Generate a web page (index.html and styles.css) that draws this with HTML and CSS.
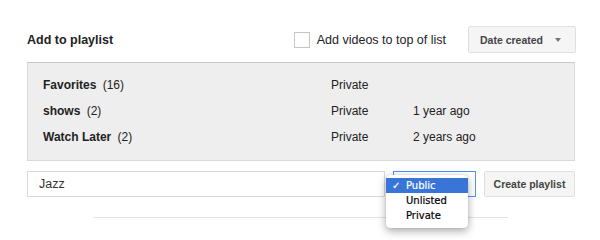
FILE: index.html
```html
<!DOCTYPE html>
<html lang="en">
<head>
    <meta charset="UTF-8">
    <title>Add to playlist</title>
    <link rel="stylesheet" href="styles.css">
</head>
<body>
    <div class="container">
        <div class="header">
            <h2>Add to playlist</h2>
            <label class="top-option">
                <span class="checkbox"></span>
                Add videos to top of list
            </label>
            <button class="btn sort-btn">Date created <span class="arrow"></span></button>
        </div>

        <ul class="playlists">
            <li><span class="name"><b>Favorites</b> (16)</span><span>Private</span><span></span></li>
            <li><span class="name"><b>shows</b> (2)</span><span>Private</span><span>1 year ago</span></li>
            <li><span class="name"><b>Watch Later</b> (2)</span><span>Private</span><span>2 years ago</span></li>
        </ul>

        <div class="create-row">
            <input type="text" class="title-input" value="Jazz">
            <div class="privacy">
                <div class="privacy-box"></div>
                <ul class="privacy-menu">
                    <li class="selected"><span class="check">&#10003;</span>Public</li>
                    <li>Unlisted</li>
                    <li>Private</li>
                </ul>
            </div>
            <button class="btn create-btn">Create playlist</button>
        </div>

        <div class="divider"></div>
    </div>
</body>
</html>
```

FILE: styles.css
```css
body {
    font-family: "Liberation Sans", Arial, sans-serif;
    margin: 0;
    padding: 0;
    min-height: 240px;
    background-color: #fff;
    color: #222;
}

.container {
    width: 548px;
    margin-left: 27px;
    padding-top: 26px;
    padding-bottom: 22px;
}

.header {
    display: flex;
    align-items: center;
    height: 27px;
}

.header h2 {
    font-size: 12.5px;
    font-weight: bold;
    margin: 0;
    flex: 1;
}

.top-option {
    display: flex;
    align-items: center;
    font-size: 12.5px;
    margin-right: 22px;
}

.checkbox {
    width: 14px;
    height: 14px;
    border: 1px solid #c6c6c6;
    margin-right: 7px;
    background: #fff;
}

.btn {
    font-family: "Liberation Sans", Arial, sans-serif;
    font-size: 10.5px;
    font-weight: bold;
    color: #444;
    background: #f5f5f5;
    border: 1px solid #e0e0e0;
    border-radius: 2px;
    height: 27px;
    padding: 0 10px;
    cursor: pointer;
}

.sort-btn {
    width: 108px;
    margin-right: -1px;
    text-align: left;
    display: flex;
    align-items: center;
    padding-left: 11px;
}

.arrow {
    margin-left: auto;
    margin-right: 4px;
    border-left: 3.5px solid transparent;
    border-right: 3.5px solid transparent;
    border-top: 4px solid #777;
}

.playlists {
    list-style: none;
    margin: 9px 0 0;
    padding: 9px 0 10px 15px;
    background: #eeeeee;
    border: 1px solid #d9d9d9;
    border-top-color: #c8c8c8;
    font-size: 12px;
}

.playlists li {
    display: grid;
    grid-template-columns: 288px 82px 1fr;
    height: 26px;
    align-items: center;
}

.playlists b {
    margin-right: 3px;
}

.create-row {
    display: flex;
    gap: 8px;
    margin-top: 10px;
    height: 26px;
}

.title-input {
    width: 358px;
    box-sizing: border-box;
    height: 26px;
    border: 1px solid #d9d9d9;
    padding: 0 11px;
    font-family: "Liberation Sans", Arial, sans-serif;
    font-size: 12.5px;
    color: #333;
    outline: none;
}

.privacy {
    position: relative;
    width: 83px;
}

.privacy-box {
    height: 26px;
    box-sizing: border-box;
    border: 1px solid #4d90fe;
    background: #fff;
}

.privacy-menu {
    position: absolute;
    top: 4px;
    left: -7px;
    width: 82px;
    margin: 0;
    padding: 3px 0 5px;
    list-style: none;
    background: #fff;
    border-radius: 4px;
    box-shadow: 0 3px 9px rgba(0, 0, 0, 0.35), 0 0 1px rgba(0, 0, 0, 0.3);
    font-family: "DejaVu Sans", sans-serif;
    font-size: 10px;
    color: #000;
    z-index: 2;
}

.privacy-menu li {
    height: 15px;
    line-height: 15px;
    padding-left: 20px;
    position: relative;
    -webkit-text-stroke: 0.2px currentColor;
}

.privacy-menu .selected {
    background: #3875d7;
    color: #fff;
}

.check {
    position: absolute;
    left: 6px;
    font-size: 10px;
    font-weight: bold;
}

.create-btn {
    width: 91px;
    height: 26px;
    padding: 0;
}

.divider {
    width: 414px;
    height: 1px;
    margin: 20px auto 0;
    background: #e3e3e3;
}
```
